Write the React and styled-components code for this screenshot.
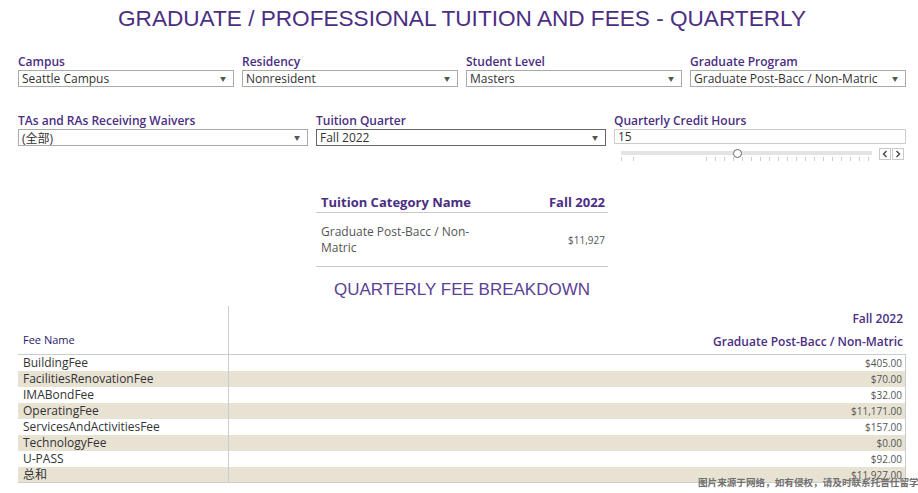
import React from 'react';
import styled, { createGlobalStyle } from 'styled-components';

const GlobalStyle = createGlobalStyle`
  body {
    margin: 0;
    background: #fff;
    font-family: 'Open Sans', 'Noto Sans CJK SC', sans-serif;
  }
`;

const Page = styled.div`
  position: relative;
  width: 918px;
  height: 493px;
  overflow: hidden;
  padding: 0 12px 0 18px;
  box-sizing: border-box;
`;

const Title = styled.h1`
  margin: 0;
  padding-top: 6px;
  text-align: center;
  font-family: 'Liberation Sans', Arial, sans-serif;
  font-weight: normal;
  font-size: 22.6px;
  line-height: 26px;
  color: #4b2e83;
`;

const FilterRow = styled.div`
  display: grid;
  grid-template-columns: ${p => p.cols};
  column-gap: 8px;
  margin-top: ${p => p.top}px;
`;

const Filter = styled.div`
  display: flex;
  flex-direction: column;
`;

const Label = styled.div`
  font-size: 12px;
  font-weight: 600;
  line-height: 14px;
  color: #4b2e83;
  margin-bottom: 1px;
  white-space: nowrap;
`;

const SelectBox = styled.div`
  height: 17px;
  box-sizing: border-box;
  border: 1px solid ${p => (p.dark ? '#666' : '#aaa')};
  display: flex;
  align-items: center;
  justify-content: space-between;
  padding: 0 7px 0 3px;
  font-size: 12px;
  color: #333;
  white-space: nowrap;
`;

const Arrow = styled.span`
  font-size: 6px;
  color: #555;
`;

const InputBox = styled.div`
  height: 15px;
  box-sizing: border-box;
  border: 1px solid #ccc;
  padding-left: 3px;
  font-size: 12px;
  line-height: 13px;
  color: #333;
`;

const SliderRow = styled.div`
  display: flex;
  align-items: flex-start;
  gap: 7px;
  padding: 4px 2px 0 7px;
`;

const Track = styled.div`
  position: relative;
  flex: 1;
  height: 13px;
`;

const TrackBar = styled.div`
  height: 4px;
  margin-top: 3px;
  background: #e4e4e4;
`;

const Thumb = styled.div`
  position: absolute;
  top: 1px;
  width: 7px;
  height: 7px;
  border-radius: 50%;
  border: 1px solid #666;
  background: #fff;
`;

const Ticks = styled.svg`
  display: block;
  margin-top: 2px;
`;

const StepButtons = styled.div`
  display: flex;
  gap: 1px;
`;

const StepButton = styled.div`
  width: 12px;
  height: 12px;
  box-sizing: border-box;
  border: 1px solid #c8c8c8;
  display: flex;
  align-items: center;
  justify-content: center;
`;

const Summary = styled.div`
  width: 292px;
  margin: 33px auto 0;
`;

const SummaryHead = styled.div`
  display: flex;
  justify-content: space-between;
  align-items: flex-end;
  padding: 0 3px 1px 5px;
  border-bottom: 1px solid #c8c8c8;
  font-size: 13px;
  font-weight: 700;
  line-height: 17px;
  color: #4b2e83;
`;

const SummaryBody = styled.div`
  display: flex;
  justify-content: space-between;
  align-items: center;
  padding: 11px 3px 10px 5px;
  border-bottom: 1px solid #c8c8c8;
`;

const SummaryName = styled.div`
  width: 160px;
  font-size: 12px;
  line-height: 16px;
  color: #555;
`;

const SummaryValue = styled.div`
  font-size: 10px;
  color: #555;
`;

const SectionTitle = styled.div`
  margin-top: 12px;
  text-align: center;
  font-family: 'Liberation Sans', Arial, sans-serif;
  font-size: 17px;
  line-height: 22px;
  color: #5a3f96;
`;

const FeeTable = styled.div`
  display: grid;
  grid-template-columns: 211px 1fr;
  margin-top: 5px;
`;

const HeadLeft = styled.div`
  height: 49px;
  box-sizing: border-box;
  border-right: 1px solid #ccc;
  border-bottom: 1px solid #ccc;
  display: flex;
  align-items: flex-end;
  padding: 0 0 7px 5px;
  font-size: 11px;
  color: #2a1b6e;
`;

const HeadRight = styled.div`
  height: 49px;
  box-sizing: border-box;
  border-bottom: 1px solid #ccc;
  display: flex;
  flex-direction: column;
  justify-content: space-between;
  align-items: flex-end;
  padding: 5px 3px 4px 0;
  font-size: 12px;
  font-weight: 600;
  line-height: 16px;
  color: #4b2e83;
`;

const Cell = styled.div`
  height: 16px;
  line-height: 16px;
  box-sizing: border-box;
  background: ${p => (p.shade ? '#e8e2d3' : '#fff')};
  border-bottom: ${p => (p.last ? '1px solid #ccc' : 'none')};
`;

const NameCell = styled(Cell)`
  border-right: 1px solid #ccc;
  padding-left: 5px;
  font-size: 12px;
  color: #333;
`;

const ValueCell = styled(Cell)`
  border-right: 1px solid #ccc;
  text-align: right;
  padding-right: 3px;
  font-size: 10px;
  color: #555;
`;

const Watermark = styled.div`
  position: absolute;
  left: 698px;
  top: 475px;
  font-family: 'Noto Sans CJK SC', sans-serif;
  font-size: 9.6px;
  font-weight: 700;
  color: #707070;
  white-space: nowrap;
`;

const fees = [
  ['BuildingFee', '$405.00'],
  ['FacilitiesRenovationFee', '$70.00'],
  ['IMABondFee', '$32.00'],
  ['OperatingFee', '$11,171.00'],
  ['ServicesAndActivitiesFee', '$157.00'],
  ['TechnologyFee', '$0.00'],
  ['U-PASS', '$92.00'],
  ['总和', '$11,927.00'],
];

const tickXs = [0, 12, 85, 94, 103, 112, 121, 130, 139, 148, 157, 166, 175, 184, 193, 202, 211, 220, 229, 238, 247];

function Select({ label, value, dark }) {
  return (
    <Filter>
      <Label>{label}</Label>
      <SelectBox dark={dark}>
        <span>{value}</span>
        <Arrow>▼</Arrow>
      </SelectBox>
    </Filter>
  );
}

export default function App() {
  return (
    <Page>
      <GlobalStyle />
      <Title>GRADUATE / PROFESSIONAL TUITION AND FEES - QUARTERLY</Title>

      <FilterRow cols="repeat(4, 216px)" top={23}>
        <Select label="Campus" value="Seattle Campus" />
        <Select label="Residency" value="Nonresident" />
        <Select label="Student Level" value="Masters" />
        <Select label="Graduate Program" value="Graduate Post-Bacc / Non-Matric" />
      </FilterRow>

      <FilterRow cols="290px 290px 292px" top={27}>
        <Select label="TAs and RAs Receiving Waivers" value="(全部)" />
        <Select label="Tuition Quarter" value="Fall 2022" dark />
        <Filter>
          <Label>Quarterly Credit Hours</Label>
          <InputBox>15</InputBox>
          <SliderRow>
            <Track>
              <TrackBar />
              <Thumb style={{ left: `${(14 / 30) * 250 - 5}px` }} />
              <Ticks width="250" height="4">
                {tickXs.map(x => (
                  <line key={x} x1={x + 0.5} x2={x + 0.5} y1="0" y2="4" stroke="#ccc" strokeWidth="1" />
                ))}
              </Ticks>
            </Track>
            <StepButtons>
              <StepButton>
                <svg width="6" height="8" viewBox="0 0 6 8">
                  <path d="M4.5 1 L1.5 4 L4.5 7" fill="none" stroke="#444" strokeWidth="1.4" />
                </svg>
              </StepButton>
              <StepButton>
                <svg width="6" height="8" viewBox="0 0 6 8">
                  <path d="M1.5 1 L4.5 4 L1.5 7" fill="none" stroke="#444" strokeWidth="1.4" />
                </svg>
              </StepButton>
            </StepButtons>
          </SliderRow>
        </Filter>
      </FilterRow>

      <Summary>
        <SummaryHead>
          <span>Tuition Category Name</span>
          <span>Fall 2022</span>
        </SummaryHead>
        <SummaryBody>
          <SummaryName>Graduate Post-Bacc / Non-Matric</SummaryName>
          <SummaryValue>$11,927</SummaryValue>
        </SummaryBody>
      </Summary>

      <SectionTitle>QUARTERLY FEE BREAKDOWN</SectionTitle>

      <FeeTable>
        <HeadLeft>Fee Name</HeadLeft>
        <HeadRight>
          <span>Fall 2022</span>
          <span>Graduate Post-Bacc / Non-Matric</span>
        </HeadRight>
        {fees.map(([name, value], i) => (
          <React.Fragment key={name}>
            <NameCell shade={i % 2 === 1} last={i === fees.length - 1}>{name}</NameCell>
            <ValueCell shade={i % 2 === 1} last={i === fees.length - 1}>{value}</ValueCell>
          </React.Fragment>
        ))}
      </FeeTable>

      <Watermark>图片来源于网络，如有侵权，请及时联系托普仕留学删除</Watermark>
    </Page>
  );
}
